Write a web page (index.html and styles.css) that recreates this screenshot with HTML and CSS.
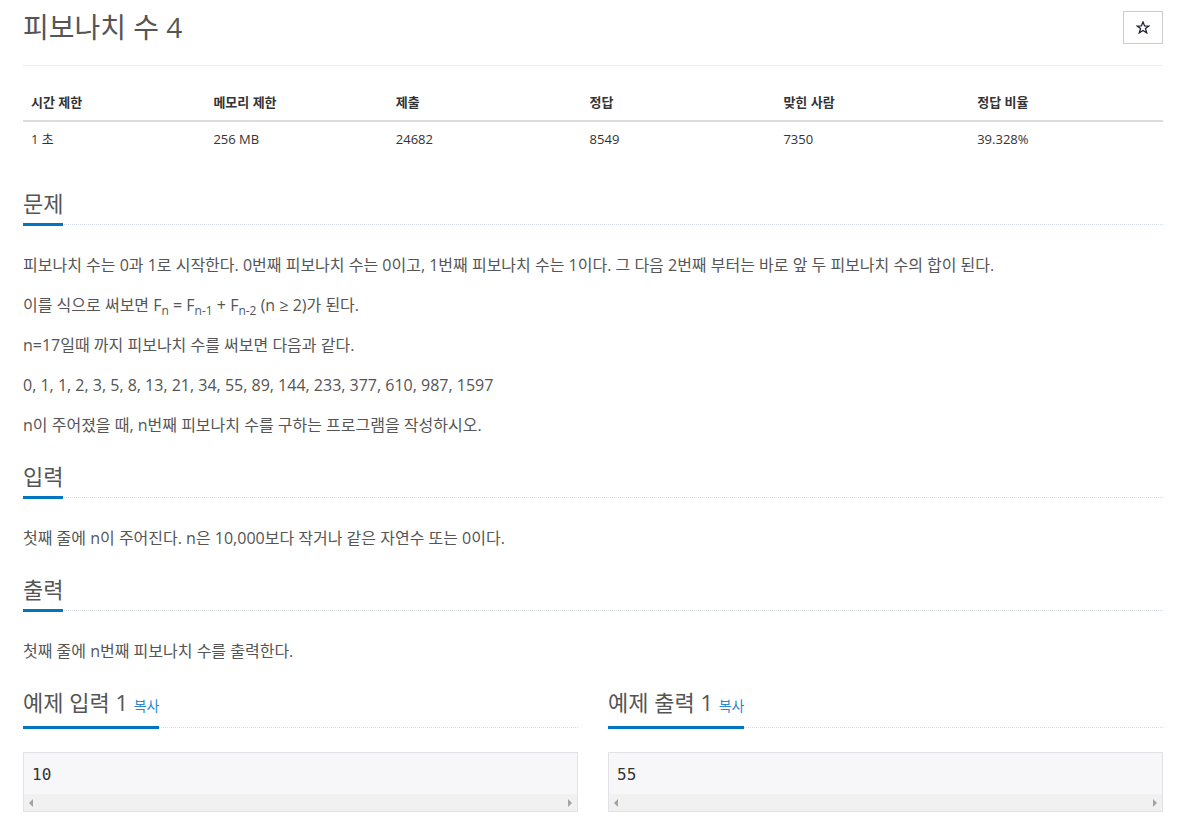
FILE: index.html
```html
<!DOCTYPE html>
<html lang="ko">
<head>
<meta charset="utf-8">
<title>피보나치 수 4</title>
<link rel="stylesheet" href="styles.css">
</head>
<body>
<div class="container">
  <div class="page-header">
    <h1 class="title">피보나치 수 4</h1>
    <button class="star-btn" type="button" aria-label="즐겨찾기">
      <svg class="star-icon" width="14" height="13" viewBox="0 0 14 13"><polygon points="7,0.9 8.6,4.9 12.9,5.0 9.5,7.6 10.7,11.8 7,9.4 3.3,11.8 4.5,7.6 1.1,5.0 5.4,4.9" fill="none" stroke="#1d2430" stroke-width="1.3" stroke-linejoin="miter"/></svg>
    </button>
  </div>

  <table class="info">
    <thead>
      <tr>
        <th class="c1">시간 제한</th>
        <th class="c2">메모리 제한</th>
        <th class="c3">제출</th>
        <th class="c4">정답</th>
        <th class="c5">맞힌 사람</th>
        <th class="c6">정답 비율</th>
      </tr>
    </thead>
    <tbody>
      <tr>
        <td>1 초</td>
        <td>256 MB</td>
        <td>24682</td>
        <td>8549</td>
        <td>7350</td>
        <td>39.328%</td>
      </tr>
    </tbody>
  </table>

  <section class="section first">
    <div class="headline"><h2>문제</h2></div>
    <div class="text">
      <p>피보나치 수는 0과 1로 시작한다. 0번째 피보나치 수는 0이고, 1번째 피보나치 수는 1이다. 그 다음 2번째 부터는 바로 앞 두 피보나치 수의 합이 된다.</p>
      <p>이를 식으로 써보면 F<sub>n</sub> = F<sub>n-1</sub> + F<sub>n-2</sub> (n ≥ 2)가 된다.</p>
      <p>n=17일때 까지 피보나치 수를 써보면 다음과 같다.</p>
      <p>0, 1, 1, 2, 3, 5, 8, 13, 21, 34, 55, 89, 144, 233, 377, 610, 987, 1597</p>
      <p>n이 주어졌을 때, n번째 피보나치 수를 구하는 프로그램을 작성하시오.</p>
    </div>
  </section>

  <section class="section">
    <div class="headline"><h2>입력</h2></div>
    <div class="text">
      <p>첫째 줄에 n이 주어진다. n은 10,000보다 작거나 같은 자연수 또는 0이다.</p>
    </div>
  </section>

  <section class="section">
    <div class="headline"><h2>출력</h2></div>
    <div class="text">
      <p>첫째 줄에 n번째 피보나치 수를 출력한다.</p>
    </div>
  </section>

  <div class="samples">
    <section class="sample">
      <div class="headline"><h2>예제 입력 1 <a class="copy" href="#">복사</a></h2></div>
      <div class="sample-box">
        <pre class="sample-data">10</pre>
        <div class="hscroll"><span class="arrow-left"></span><span class="arrow-right"></span></div>
      </div>
    </section>
    <section class="sample">
      <div class="headline"><h2>예제 출력 1 <a class="copy" href="#">복사</a></h2></div>
      <div class="sample-box">
        <pre class="sample-data">55</pre>
        <div class="hscroll"><span class="arrow-left"></span><span class="arrow-right"></span></div>
      </div>
    </section>
  </div>
</div>
</body>
</html>
```

FILE: styles.css
```css
* { box-sizing: border-box; }

html, body {
  margin: 0;
  padding: 0;
  background: #fff;
}

body {
  font-family: "Open Sans", "Noto Sans CJK KR", sans-serif;
  font-size: 14px;
  line-height: 20px;
  color: #333;
}

.container {
  width: 1140px;
  margin-left: 23px;
  display: flex;
  flex-direction: column;
}

.page-header {
  display: flex;
  justify-content: space-between;
  align-items: flex-start;
  padding-top: 11px;
  padding-bottom: 21px;
  border-bottom: 1px solid #eee;
}

.title {
  margin: 0;
  font-size: 28px;
  line-height: 33px;
  font-weight: 400;
  color: #555;
}

.star-btn {
  width: 40px;
  height: 33px;
  padding: 0;
  border: 1px solid #ccc;
  border-radius: 0;
  background: #fff;
  display: flex;
  align-items: center;
  justify-content: center;
}

.star-icon { display: block; }

.info {
  width: 100%;
  border-collapse: collapse;
  margin-top: 18px;
  table-layout: fixed;
}

.info th, .info td {
  text-align: left;
  padding: 8px;
  font-size: 13px;
  line-height: 20px;
  color: #333;
}

.info th {
  font-weight: 700;
  border-bottom: 2px solid #ddd;
}

.info td {
  padding-top: 7px;
  padding-bottom: 9px;
  font-weight: 400;
}

.info .c1, .info .c2 { width: 16%; }
.info .c3, .info .c4, .info .c5, .info .c6 { width: 17%; }

.section.first { margin-top: 32px; }
.section { margin-top: 13px; }

.headline {
  display: flex;
  border-bottom: 1px dotted #d5dbe5;
  margin-bottom: 25px;
}

.headline h2 {
  margin: 0 0 -2px 0;
  font-size: 22px;
  line-height: 26px;
  font-weight: 400;
  color: #555;
  padding-bottom: 7px;
  border-bottom: 3px solid #0076c0;
}

.text p {
  margin: 0 0 10px 0;
  font-size: 16px;
  line-height: 30px;
  color: #555;
}

.text sub {
  font-size: 12px;
  line-height: 0;
  vertical-align: -4px;
}

.copy {
  font-size: 14px;
  color: #2f86cf;
  text-decoration: none;
}

.samples {
  display: grid;
  grid-template-columns: 1fr 1fr;
  column-gap: 30px;
  margin-top: 13px;
}

.sample .headline { margin-bottom: 24px; }

.sample-box {
  border: 1px solid #e1e1e8;
  background: #f7f7f9;
}

.sample-data {
  margin: 0;
  padding: 12px 8px 9px 8px;
  font-family: "DejaVu Sans Mono", monospace;
  font-size: 16px;
  line-height: 20px;
  color: #333;
}

.hscroll {
  height: 17px;
  background: #f1f1f1;
  display: flex;
  justify-content: space-between;
  align-items: center;
  padding: 0 5px;
}

.arrow-left {
  width: 0;
  height: 0;
  border-top: 4px solid transparent;
  border-bottom: 4px solid transparent;
  border-right: 4px solid #a3a3a3;
}

.arrow-right {
  width: 0;
  height: 0;
  border-top: 4px solid transparent;
  border-bottom: 4px solid transparent;
  border-left: 4px solid #a3a3a3;
}
```
